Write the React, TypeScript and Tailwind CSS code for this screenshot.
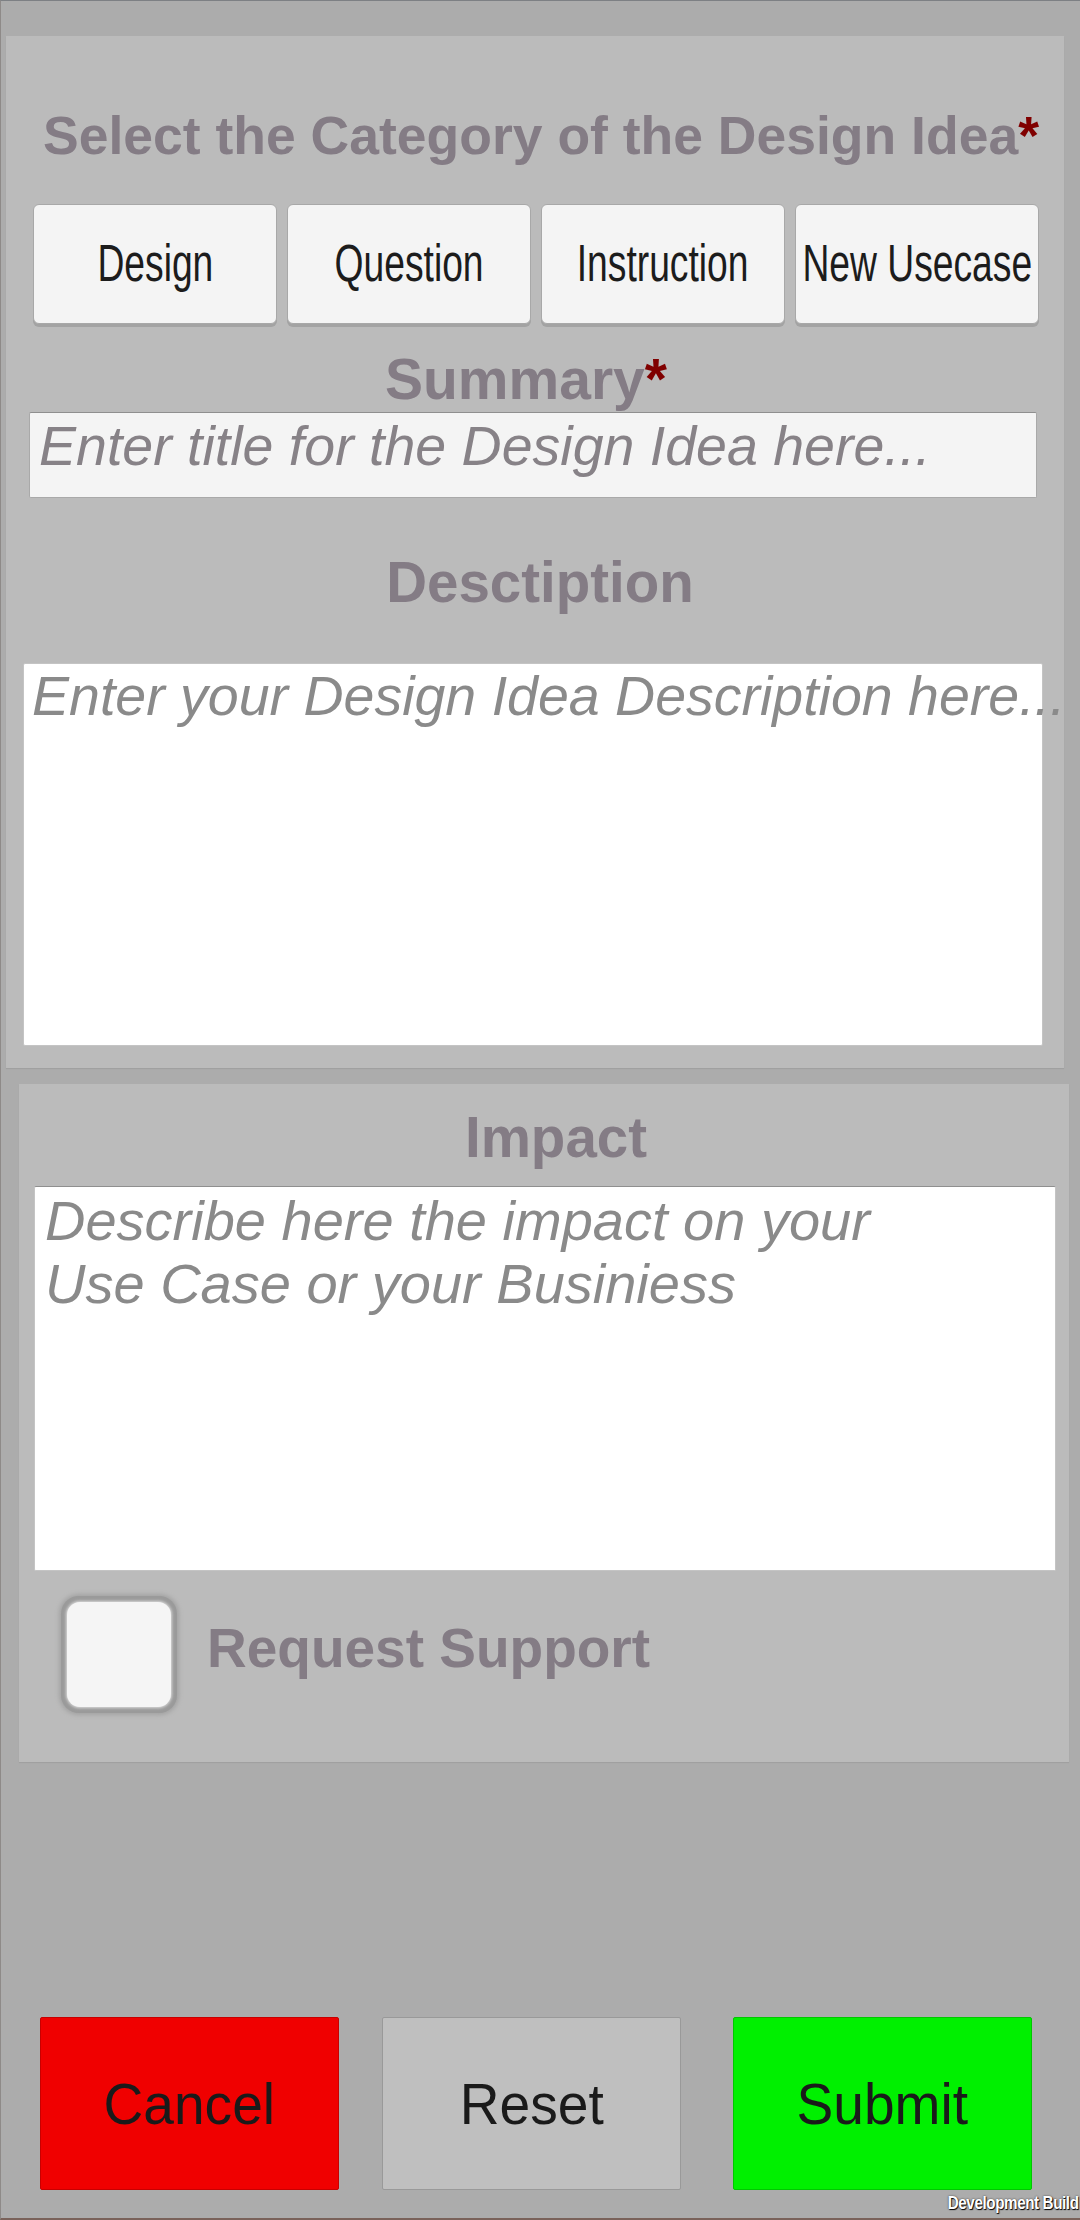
import React from "react";

const categories = ["Design", "Question", "Instruction", "New Usecase"];

const Star = () => <span className="text-[#800000]">*</span>;

const CategoryButton = ({ label }: { label: string }) => (
  <button className="w-[244px] h-[120px] shrink-0 flex items-center justify-center rounded-[6px] bg-[#f4f4f4] border border-[#a8a8a8] shadow-[0_3px_0_#a3a3a3] overflow-visible">
    <span className="inline-block whitespace-nowrap text-[51px] leading-none text-[#1c1c1c] scale-x-[0.73]">
      {label}
    </span>
  </button>
);

const DesignIdeaForm = () => {
  return (
    <div className="relative w-[1080px] h-[2220px] overflow-hidden bg-[#acacac] font-['Liberation_Sans',Arial,sans-serif] border-l border-[#8e8a88] border-t border-t-[#7d8084] border-b-2 border-b-[#7a625a]">
      {/* main panel */}
      <div className="mt-[35px] ml-[5px] w-[1058px] h-[1032px] bg-[#bbbbbb] shadow-[0_1px_1px_#a0a0a0] flex flex-col">
        <div className="pt-[73px] pl-[12px] text-center text-[53.5px] leading-none font-bold text-[#847c85] whitespace-nowrap">
          Select the Category of the Design Idea<Star />
        </div>
        <div className="mt-[41px] ml-[27px] flex gap-[10px]">
          {categories.map((c) => (
            <CategoryButton key={c} label={c} />
          ))}
        </div>
        <div className="mt-[27px] pr-[18px] text-center text-[57px] leading-none font-bold text-[#847c85]">
          Summary<Star />
        </div>
        <div className="mt-[4px] ml-[23px] w-[1008px] h-[86px] bg-[#f4f4f4] border border-[#a9a9a9] border-t-[#8f8f8f] rounded-[2px] pt-[6px] pl-[9px]">
          <span className="text-[55.5px] leading-none italic text-[#878287] whitespace-nowrap">
            Enter title for the Design Idea here...
          </span>
        </div>
        <div className="mt-[57px] pl-[10px] text-center text-[56.5px] leading-none font-bold text-[#847c85]">
          Desctiption
        </div>
        <div className="mt-[52px] ml-[17px] w-[1020px] h-[383px] bg-white border border-[#c4c4c4] rounded-[2px] pt-[5px] pl-[8px] overflow-visible">
          <div className="text-[55.5px] leading-none italic text-[#8a8a8a] whitespace-nowrap">
            Enter your Design Idea Description here...
          </div>
        </div>
      </div>

      {/* impact panel */}
      <div className="mt-[16px] ml-[18px] w-[1050px] h-[678px] bg-[#bbbbbb] shadow-[0_1px_1px_#a0a0a0] flex flex-col">
        <div className="pt-[26px] pl-[24px] text-center text-[56.5px] leading-none font-bold text-[#847c85]">
          Impact
        </div>
        <div className="mt-[19px] ml-[15px] w-[1022px] h-[385px] bg-white border border-[#c4c4c4] border-t-[#8f8f8f] rounded-[2px] pt-[2px] pl-[10px]">
          <div className="text-[56px] leading-[63px] italic text-[#8a8a8a]">
            Describe here the impact on your
            <br />
            Use Case or your Businiess
          </div>
        </div>
        <div className="mt-[25px] ml-[42px] flex items-start">
          <div className="w-[116px] h-[117px] rounded-[18px] bg-[#9a9a9a] p-[6px] shadow-[0_0_4px_2px_#a3a3a3]">
            <div className="w-full h-full rounded-[13px] bg-[#f5f5f5] shadow-[0_0_3px_1px_#dcdcdc]" />
          </div>
          <div className="mt-[25px] ml-[30px] text-[55px] leading-none font-bold text-[#847c85] whitespace-nowrap">
            Request Support
          </div>
        </div>
      </div>

      {/* action buttons */}
      <div className="mt-[255px] ml-[39px] flex">
        <button className="w-[299px] h-[173px] bg-[#f00000] border border-[#c80000] rounded-[2px] text-[58px] text-[#1a1a1a] leading-none">
          <span className="inline-block scale-x-[0.95]">Cancel</span>
        </button>
        <button className="ml-[43px] w-[299px] h-[173px] bg-[#bfbfbf] border border-[#999999] rounded-[2px] text-[58px] text-[#1a1a1a] leading-none">
          <span className="inline-block scale-x-[0.95]">Reset</span>
        </button>
        <button className="ml-[52px] w-[299px] h-[173px] bg-[#00f000] border border-[#00c800] rounded-[2px] text-[58px] text-[#1a1a1a] leading-none">
          <span className="inline-block scale-x-[0.95]">Submit</span>
        </button>
      </div>

      <div className="absolute right-[1px] bottom-[6px] text-[19px] leading-none font-bold text-white tracking-[-0.5px] scale-x-[0.8] origin-right [text-shadow:1px_1px_1px_#000,0_0_2px_#333]">
        Development Build
      </div>
    </div>
  );
};

export default function App() {
  return <DesignIdeaForm />;
}
